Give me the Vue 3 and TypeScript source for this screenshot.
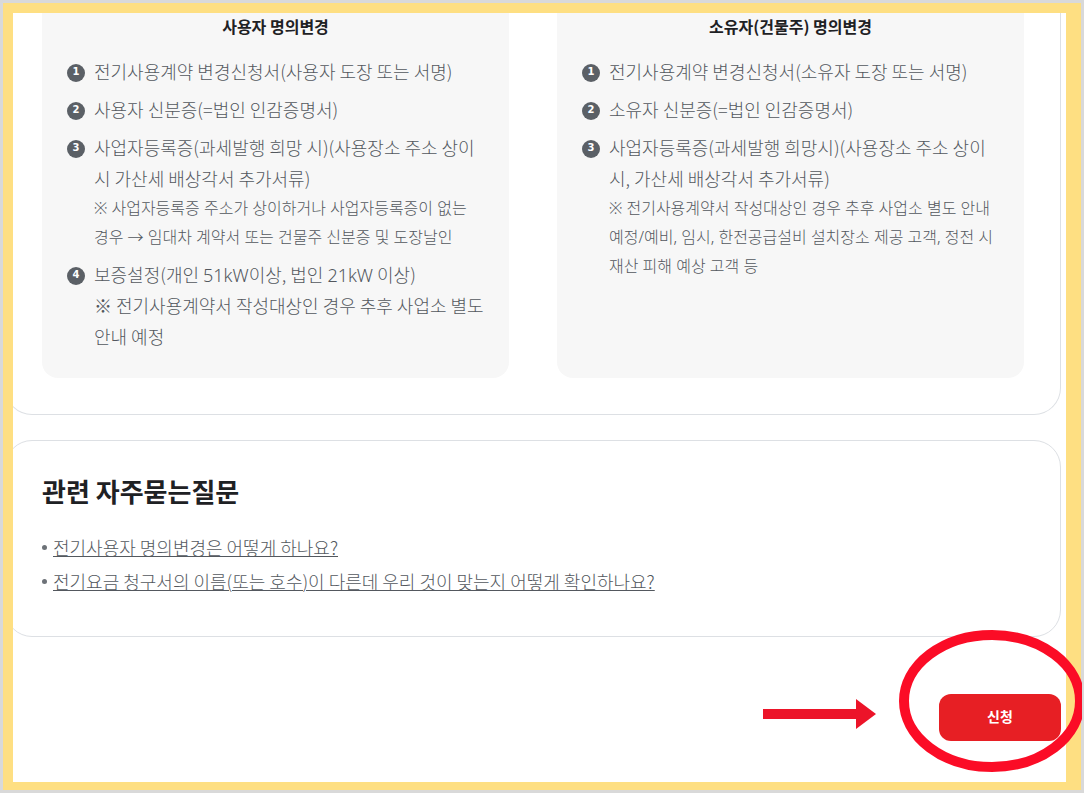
<script setup lang="ts">
interface DocItem {
  lines: string[]
  note?: string[]
}
interface DocPanel {
  title: string
  items: DocItem[]
}
interface TextRun {
  text: string
  latin: boolean
}

const panels: DocPanel[] = [
  {
    title: '사용자 명의변경',
    items: [
      { lines: ['전기사용계약 변경신청서(사용자 도장 또는 서명)'] },
      { lines: ['사용자 신분증(=법인 인감증명서)'] },
      {
        lines: ['사업자등록증(과세발행 희망 시)(사용장소 주소 상이', '시 가산세 배상각서 추가서류)'],
        note: ['※ 사업자등록증 주소가 상이하거나 사업자등록증이 없는', '경우 → 임대차 계약서 또는 건물주 신분증 및 도장날인'],
      },
      {
        lines: ['보증설정(개인 51kW이상, 법인 21kW 이상)', '※ 전기사용계약서 작성대상인 경우 추후 사업소 별도', '안내 예정'],
      },
    ],
  },
  {
    title: '소유자(건물주) 명의변경',
    items: [
      { lines: ['전기사용계약 변경신청서(소유자 도장 또는 서명)'] },
      { lines: ['소유자 신분증(=법인 인감증명서)'] },
      {
        lines: ['사업자등록증(과세발행 희망시)(사용장소 주소 상이', '시, 가산세 배상각서 추가서류)'],
        note: [
          '※ 전기사용계약서 작성대상인 경우 추후 사업소 별도 안내',
          '예정/예비, 임시, 한전공급설비 설치장소 제공 고객, 정전 시',
          '재산 피해 예상 고객 등',
        ],
      },
    ],
  },
]

const questions: string[] = [
  '전기사용자 명의변경은 어떻게 하나요?',
  '전기요금 청구서의 이름(또는 호수)이 다른데 우리 것이 맞는지 어떻게 확인하나요?',
]

// Splits a line so that figures and units can be set in the Latin face.
function toRuns(line: string): TextRun[] {
  return line
    .split(/([0-9A-Za-z]+)/)
    .filter((text) => text.length > 0)
    .map((text) => ({ text, latin: /^[0-9A-Za-z]/.test(text) }))
}
</script>

<template>
  <div class="frame">
    <main class="page">
      <div class="sections">
        <section class="card documents">
          <article v-for="panel in panels" :key="panel.title" class="panel">
            <h3 class="panel-title">{{ panel.title }}</h3>
            <ol class="steps">
              <li v-for="(item, index) in panel.items" :key="index" class="step">
                <span class="badge">{{ index + 1 }}</span>
                <div class="step-body">
                  <p v-for="line in item.lines" :key="line" class="step-text"><template v-for="(run, i) in toRuns(line)" :key="i"><span v-if="run.latin" class="latin">{{ run.text }}</span><template v-else>{{ run.text }}</template></template></p>
                  <p v-if="item.note" class="step-note">{{ item.note.join('\n') }}</p>
                </div>
              </li>
            </ol>
          </article>
        </section>

        <section class="card faq">
          <h2 class="faq-title">관련 자주묻는질문</h2>
          <ul class="faq-list">
            <li v-for="question in questions" :key="question" class="faq-item">
              <a href="#" class="faq-link">{{ question }}</a>
            </li>
          </ul>
        </section>
      </div>

      <div class="actions">
        <svg class="arrow" width="113" height="40" viewBox="0 0 113 40" aria-hidden="true">
          <path d="M0 15H93V5L113 20L93 35V25H0Z" fill="#ec1429" />
        </svg>
        <div class="apply">
          <button type="button" class="apply-button">신청</button>
          <svg class="ring" width="183" height="142" viewBox="0 0 183 142" aria-hidden="true">
            <ellipse cx="93" cy="71" rx="88" ry="66" fill="none" stroke="#fb0c26" stroke-width="10" />
          </svg>
        </div>
      </div>
    </main>
  </div>
</template>

<style>
body {
  margin: 0;
}
</style>

<style scoped>
.frame {
  box-sizing: border-box;
  min-height: 100vh;
  display: flex;
  border: 3px solid #d9d9d9;
  font-family: "Noto Sans CJK KR", "Noto Sans", sans-serif;
  color: #53585e;
}

.page {
  flex: 1;
  min-width: 0;
  border: solid #fedf82;
  border-width: 10px 15px 8px 10px;
  background: #fff;
}

.sections {
  display: flex;
  flex-direction: column;
  gap: 25px;
  padding-right: 5px;
  overflow: hidden;
}

.card {
  margin-left: -8px;
  padding: 0 36px 36px;
  border: 1px solid #dde0e4;
  border-radius: 27px;
}

.documents {
  display: grid;
  grid-template-columns: 1fr 1fr;
  gap: 48px;
  border-top: 0;
  border-top-left-radius: 0;
  border-top-right-radius: 0;
}

.panel {
  min-width: 0;
  padding: 1px 25px 26px;
  border-radius: 0 0 16px 16px;
  background: #f7f7f7;
}

.panel-title {
  margin: 0 0 18px;
  font-size: 16px;
  font-weight: 700;
  line-height: 24px;
  text-align: center;
  color: #1e2124;
}

.steps {
  display: flex;
  flex-direction: column;
  gap: 7px;
  margin: 0;
  padding: 0;
  list-style: none;
}

.step {
  display: flex;
  gap: 9px;
}

.badge {
  flex: none;
  width: 18px;
  height: 18px;
  margin-top: 8px;
  border-radius: 50%;
  background: #5b6066;
  color: #fff;
  font-family: "DejaVu Sans", sans-serif;
  font-size: 10px;
  font-weight: 700;
  line-height: 16px;
  text-align: center;
}

.step-text,
.step-note {
  margin: 0;
  white-space: pre;
  font-weight: 300;
}

.step-text {
  font-size: 18px;
  line-height: 31px;
}

.step-note {
  font-family: "Noto Sans", "Noto Sans CJK KR", sans-serif;
  font-size: 16px;
  line-height: 29px;
}

.latin {
  font-family: "Noto Sans", sans-serif;
  line-height: 1;
}

.faq {
  padding-top: 32px;
  padding-bottom: 38px;
}

.faq-title {
  margin: 0 0 21px;
  font-size: 26px;
  font-weight: 700;
  line-height: 36px;
  color: #1e2124;
}

.faq-list {
  margin: 0;
  padding: 0;
  list-style: none;
}

.faq-item {
  display: flex;
  align-items: center;
  gap: 6px;
  font-size: 18px;
  font-weight: 300;
  line-height: 34px;
}

.faq-item::before {
  content: "";
  flex: none;
  width: 5px;
  height: 5px;
  border-radius: 50%;
  background: #6d7278;
}

.faq-link {
  color: inherit;
  text-decoration: underline;
  text-decoration-thickness: 1px;
}

.actions {
  display: flex;
  justify-content: flex-end;
  align-items: flex-start;
  gap: 63px;
  padding: 57px 5px 40px;
}

.apply {
  position: relative;
}

.apply-button {
  display: block;
  width: 122px;
  height: 47px;
  padding: 0 0 4px;
  border: 0;
  border-radius: 12px;
  background: #e71f24;
  color: #fff;
  font-family: inherit;
  font-size: 14px;
  font-weight: 700;
  cursor: pointer;
}

.ring {
  position: absolute;
  left: -40px;
  top: -64px;
  pointer-events: none;
}
</style>
